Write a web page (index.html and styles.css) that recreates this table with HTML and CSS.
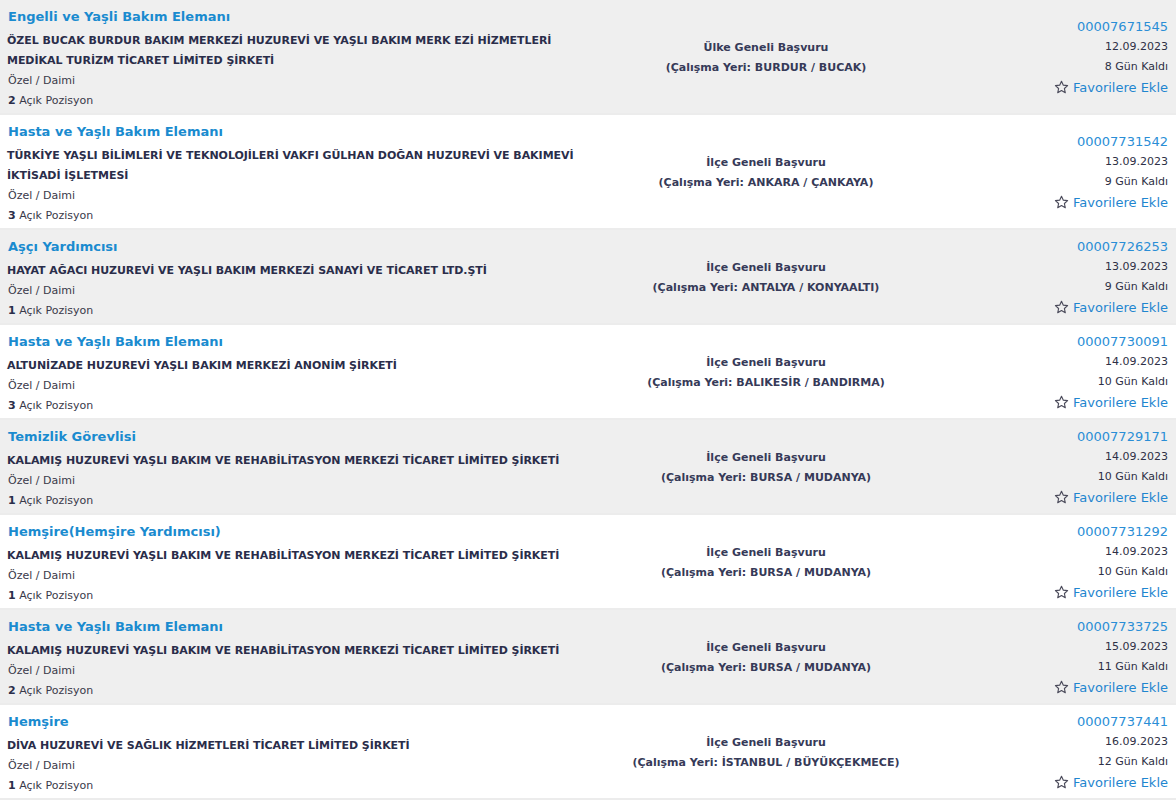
FILE: index.html
```html
<!DOCTYPE html>
<html lang="tr">
<head>
    <meta charset="UTF-8">
    <title>İş İlanları</title>
    <link rel="stylesheet" href="styles.css">
</head>
<body>
    <div class="list">

        <div class="row odd">
            <div class="info">
                <a class="title" href="#">Engelli ve Yaşli Bakım Elemanı</a>
                <div class="company">ÖZEL BUCAK BURDUR BAKIM MERKEZİ HUZUREVİ VE YAŞLI BAKIM MERK EZİ HİZMETLERİ MEDİKAL TURİZM TİCARET LİMİTED ŞİRKETİ</div>
                <div class="type">Özel / Daimi</div>
                <div class="type"><b>2</b> Açık Pozisyon</div>
            </div>
            <div class="place">Ülke Geneli Başvuru<br>(Çalışma Yeri: BURDUR / BUCAK)</div>
            <div class="meta">
                <a class="no" href="#">00007671545</a>
                <span>12.09.2023</span>
                <span>8 Gün Kaldı</span>
                <a class="fav" href="#"><svg viewBox="0 0 16 16"><path d="M8 1.3l1.95 4.2 4.55.5-3.4 3.1.95 4.5L8 11.3l-4.05 2.3.95-4.5-3.4-3.1 4.55-.5z"/></svg>Favorilere Ekle</a>
            </div>
        </div>

        <div class="row">
            <div class="info">
                <a class="title" href="#">Hasta ve Yaşlı Bakım Elemanı</a>
                <div class="company">TÜRKİYE YAŞLI BİLİMLERİ VE TEKNOLOJİLERİ VAKFI GÜLHAN DOĞAN HUZUREVİ VE BAKIMEVİ İKTİSADİ İŞLETMESİ</div>
                <div class="type">Özel / Daimi</div>
                <div class="type"><b>3</b> Açık Pozisyon</div>
            </div>
            <div class="place">İlçe Geneli Başvuru<br>(Çalışma Yeri: ANKARA / ÇANKAYA)</div>
            <div class="meta">
                <a class="no" href="#">00007731542</a>
                <span>13.09.2023</span>
                <span>9 Gün Kaldı</span>
                <a class="fav" href="#"><svg viewBox="0 0 16 16"><path d="M8 1.3l1.95 4.2 4.55.5-3.4 3.1.95 4.5L8 11.3l-4.05 2.3.95-4.5-3.4-3.1 4.55-.5z"/></svg>Favorilere Ekle</a>
            </div>
        </div>

        <div class="row odd">
            <div class="info">
                <a class="title" href="#">Aşçı Yardımcısı</a>
                <div class="company">HAYAT AĞACI HUZUREVİ VE YAŞLI BAKIM MERKEZİ SANAYİ VE TİCARET LTD.ŞTİ</div>
                <div class="type">Özel / Daimi</div>
                <div class="type"><b>1</b> Açık Pozisyon</div>
            </div>
            <div class="place">İlçe Geneli Başvuru<br>(Çalışma Yeri: ANTALYA / KONYAALTI)</div>
            <div class="meta">
                <a class="no" href="#">00007726253</a>
                <span>13.09.2023</span>
                <span>9 Gün Kaldı</span>
                <a class="fav" href="#"><svg viewBox="0 0 16 16"><path d="M8 1.3l1.95 4.2 4.55.5-3.4 3.1.95 4.5L8 11.3l-4.05 2.3.95-4.5-3.4-3.1 4.55-.5z"/></svg>Favorilere Ekle</a>
            </div>
        </div>

        <div class="row">
            <div class="info">
                <a class="title" href="#">Hasta ve Yaşlı Bakım Elemanı</a>
                <div class="company">ALTUNİZADE HUZUREVİ YAŞLI BAKIM MERKEZİ ANONİM ŞİRKETİ</div>
                <div class="type">Özel / Daimi</div>
                <div class="type"><b>3</b> Açık Pozisyon</div>
            </div>
            <div class="place">İlçe Geneli Başvuru<br>(Çalışma Yeri: BALIKESİR / BANDIRMA)</div>
            <div class="meta">
                <a class="no" href="#">00007730091</a>
                <span>14.09.2023</span>
                <span>10 Gün Kaldı</span>
                <a class="fav" href="#"><svg viewBox="0 0 16 16"><path d="M8 1.3l1.95 4.2 4.55.5-3.4 3.1.95 4.5L8 11.3l-4.05 2.3.95-4.5-3.4-3.1 4.55-.5z"/></svg>Favorilere Ekle</a>
            </div>
        </div>

        <div class="row odd">
            <div class="info">
                <a class="title" href="#">Temizlik Görevlisi</a>
                <div class="company">KALAMIŞ HUZUREVİ YAŞLI BAKIM VE REHABİLİTASYON MERKEZİ TİCARET LİMİTED ŞİRKETİ</div>
                <div class="type">Özel / Daimi</div>
                <div class="type"><b>1</b> Açık Pozisyon</div>
            </div>
            <div class="place">İlçe Geneli Başvuru<br>(Çalışma Yeri: BURSA / MUDANYA)</div>
            <div class="meta">
                <a class="no" href="#">00007729171</a>
                <span>14.09.2023</span>
                <span>10 Gün Kaldı</span>
                <a class="fav" href="#"><svg viewBox="0 0 16 16"><path d="M8 1.3l1.95 4.2 4.55.5-3.4 3.1.95 4.5L8 11.3l-4.05 2.3.95-4.5-3.4-3.1 4.55-.5z"/></svg>Favorilere Ekle</a>
            </div>
        </div>

        <div class="row">
            <div class="info">
                <a class="title" href="#">Hemşire(Hemşire Yardımcısı)</a>
                <div class="company">KALAMIŞ HUZUREVİ YAŞLI BAKIM VE REHABİLİTASYON MERKEZİ TİCARET LİMİTED ŞİRKETİ</div>
                <div class="type">Özel / Daimi</div>
                <div class="type"><b>1</b> Açık Pozisyon</div>
            </div>
            <div class="place">İlçe Geneli Başvuru<br>(Çalışma Yeri: BURSA / MUDANYA)</div>
            <div class="meta">
                <a class="no" href="#">00007731292</a>
                <span>14.09.2023</span>
                <span>10 Gün Kaldı</span>
                <a class="fav" href="#"><svg viewBox="0 0 16 16"><path d="M8 1.3l1.95 4.2 4.55.5-3.4 3.1.95 4.5L8 11.3l-4.05 2.3.95-4.5-3.4-3.1 4.55-.5z"/></svg>Favorilere Ekle</a>
            </div>
        </div>

        <div class="row odd">
            <div class="info">
                <a class="title" href="#">Hasta ve Yaşlı Bakım Elemanı</a>
                <div class="company">KALAMIŞ HUZUREVİ YAŞLI BAKIM VE REHABİLİTASYON MERKEZİ TİCARET LİMİTED ŞİRKETİ</div>
                <div class="type">Özel / Daimi</div>
                <div class="type"><b>2</b> Açık Pozisyon</div>
            </div>
            <div class="place">İlçe Geneli Başvuru<br>(Çalışma Yeri: BURSA / MUDANYA)</div>
            <div class="meta">
                <a class="no" href="#">00007733725</a>
                <span>15.09.2023</span>
                <span>11 Gün Kaldı</span>
                <a class="fav" href="#"><svg viewBox="0 0 16 16"><path d="M8 1.3l1.95 4.2 4.55.5-3.4 3.1.95 4.5L8 11.3l-4.05 2.3.95-4.5-3.4-3.1 4.55-.5z"/></svg>Favorilere Ekle</a>
            </div>
        </div>

        <div class="row">
            <div class="info">
                <a class="title" href="#">Hemşire</a>
                <div class="company">DİVA HUZUREVİ VE SAĞLIK HİZMETLERİ TİCARET LİMİTED ŞİRKETİ</div>
                <div class="type">Özel / Daimi</div>
                <div class="type"><b>1</b> Açık Pozisyon</div>
            </div>
            <div class="place">İlçe Geneli Başvuru<br>(Çalışma Yeri: İSTANBUL / BÜYÜKÇEKMECE)</div>
            <div class="meta">
                <a class="no" href="#">00007737441</a>
                <span>16.09.2023</span>
                <span>12 Gün Kaldı</span>
                <a class="fav" href="#"><svg viewBox="0 0 16 16"><path d="M8 1.3l1.95 4.2 4.55.5-3.4 3.1.95 4.5L8 11.3l-4.05 2.3.95-4.5-3.4-3.1 4.55-.5z"/></svg>Favorilere Ekle</a>
            </div>
        </div>

    </div>
</body>
</html>
```

FILE: styles.css
```css
body {
    margin: 0;
    font-family: "DejaVu Sans", Verdana, sans-serif;
    color: #2e3046;
    background: #fff;
}
a {
    text-decoration: none;
}
.row {
    display: grid;
    grid-template-columns: 583px 352px 1fr;
    align-items: center;
    padding: 6px 8px 2px 7px;
    border-bottom: 2px solid #ececec;
    background: #fff;
}
.row.odd {
    background: #efefef;
}
.info {
    display: flex;
    flex-direction: column;
    align-self: start;
}
.title {
    font-size: 13px;
    font-weight: bold;
    line-height: 22px;
    color: #1a8bcf;
    margin-left: 1px;
    margin-bottom: 3px;
}
.company {
    font-size: 11px;
    font-weight: bold;
    line-height: 20px;
    color: #2a2d4a;
    letter-spacing: -0.05px;
}
.type {
    font-size: 11px;
    line-height: 20px;
    color: #3a3a4a;
    margin-left: 1px;
}
.type b {
    color: #2a2d4a;
}
.place {
    text-align: center;
    font-size: 11px;
    font-weight: bold;
    line-height: 20px;
    color: #363a58;
    padding-bottom: 2px;
}
.meta {
    display: flex;
    flex-direction: column;
    align-items: flex-end;
    font-size: 11px;
    line-height: 20px;
    color: #2e3046;
    padding-bottom: 2px;
}
.no {
    font-size: 13px;
    color: #2a8ed6;
}
.fav {
    display: flex;
    align-items: center;
    gap: 4px;
    font-size: 13px;
    line-height: 22px;
    color: #1f86cf;
}
.fav svg {
    width: 15px;
    height: 15px;
    fill: none;
    stroke: #4a4a5a;
    stroke-width: 1.2;
    stroke-linejoin: round;
}
```
